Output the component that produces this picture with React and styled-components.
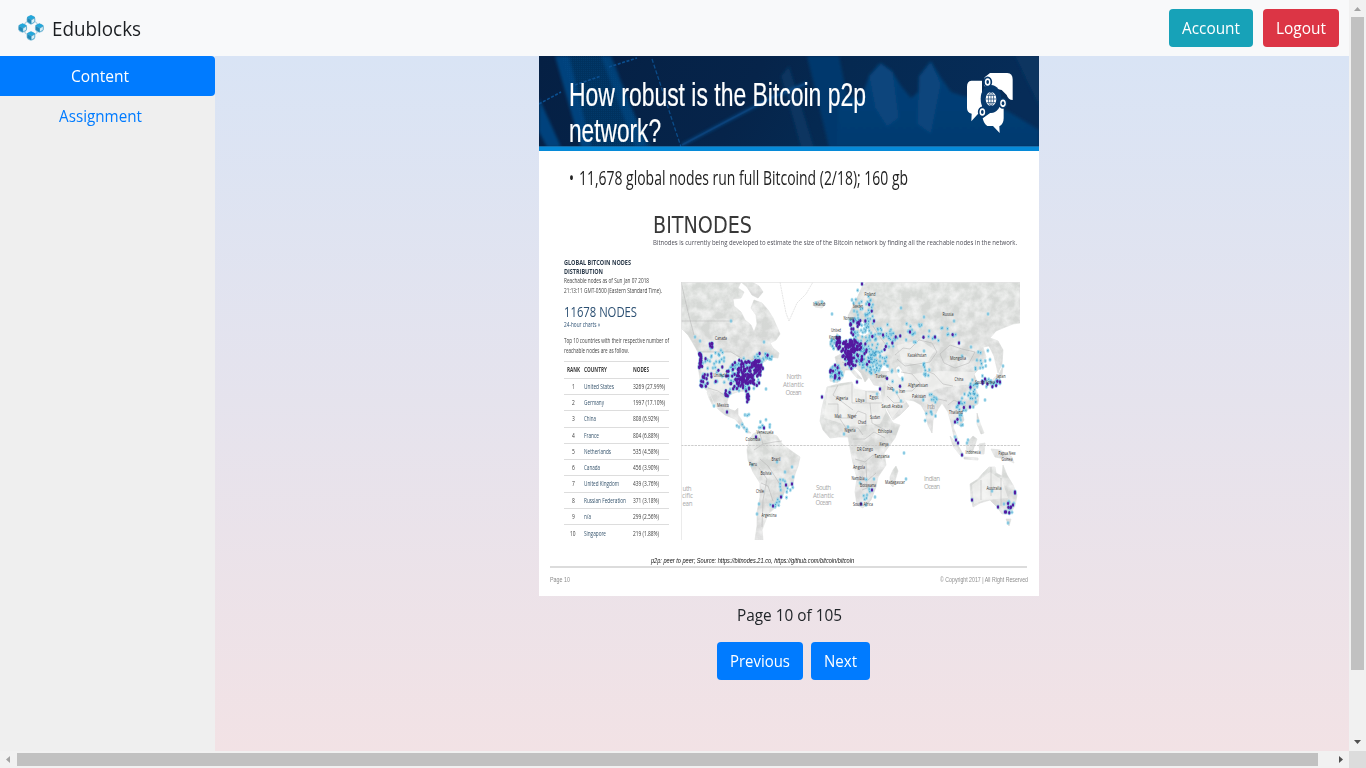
import React, { useLayoutEffect, useRef, useState } from "react";
import styled, { createGlobalStyle } from "styled-components";

const GlobalStyle = createGlobalStyle`
  * { box-sizing: border-box; }
  html, body { margin: 0; padding: 0; overflow: hidden; }
  body { font-family: "Open Sans", "Noto Sans", sans-serif; font-size: 16px; line-height: 24px; color: #212529; }
`;

/* ---------- text that is condensed to a given width ---------- */
const FitBox = styled.span`
  display: inline-block;
  flex: none;
  white-space: nowrap;
  text-align: left;
`;
const FitInner = styled.span`
  display: inline-block;
  transform-origin: 0 50%;
`;
function Fit({ w, children }) {
  const ref = useRef(null);
  const [scale, setScale] = useState(1);
  useLayoutEffect(() => {
    const natural = ref.current.offsetWidth;
    if (natural) setScale(w / ref.current.getBoundingClientRect().width * scale);
  }, [w]);
  return (
    <FitBox style={{ width: w }}>
      <FitInner ref={ref} style={{ transform: `scaleX(${scale})` }}>{children}</FitInner>
    </FitBox>
  );
}

/* ---------- page frame ---------- */
const Window = styled.div`
  display: grid;
  grid-template-columns: 1349px 17px;
  grid-template-rows: 751px 17px;
  width: 1366px;
  height: 768px;
  overflow: hidden;
`;
const Page = styled.div`
  display: flex;
  flex-direction: column;
  overflow: hidden;
`;
const Navbar = styled.nav`
  display: flex;
  flex: none;
  align-items: center;
  gap: 10px;
  height: 56px;
  padding: 0 10px 0 16px;
  background: #f8f9fa;
`;
const Brand = styled.a`
  display: flex;
  align-items: center;
  gap: 6px;
  margin-right: auto;
  font-size: 20px;
  line-height: 30px;
  color: #1b1e21;
`;
const BrandName = styled.span`
  display: flex;
  padding-top: 2px;
`;
const Button = styled.button`
  display: flex;
  align-items: center;
  justify-content: center;
  height: 38px;
  padding: 0 13px;
  border: 0;
  border-radius: 4px;
  background: ${(p) => p.$bg};
  color: #fff;
  font: inherit;
`;
const Body = styled.div`
  display: flex;
  flex: 1;
  min-height: 0;
`;
const Sidebar = styled.aside`
  flex: none;
  width: 215px;
  background: #efefef;
`;
const NavPill = styled.a`
  display: flex;
  justify-content: center;
  align-items: center;
  height: 40px;
  padding-right: 15px;
  border-radius: 0 4px 4px 0;
  background: ${(p) => (p.$active ? "#007bff" : "transparent")};
  color: ${(p) => (p.$active ? "#fff" : "#007bff")};
`;
const Main = styled.main`
  flex: 1;
  padding-left: 324px;
  background: linear-gradient(to bottom, #d9e4f5 0%, #f2e2e5 100%);
`;
const Viewer = styled.div`
  display: flex;
  flex-direction: column;
  align-items: center;
  width: 500px;
`;
const PageCount = styled.div`
  height: 24px;
  margin: 7px 0 15px;
`;
const Pager = styled.div`
  display: flex;
  gap: 8px;
  margin-left: 9px;
`;

/* ---------- scrollbars ---------- */
const VBar = styled.div`
  display: flex;
  flex-direction: column;
  align-items: center;
  background: #f1f1f1;
`;
const HBar = styled.div`
  display: flex;
  align-items: center;
  background: #f1f1f1;
`;
const Corner = styled.div`
  background: #dcdcdc;
`;
const ArrowBox = styled.svg`
  flex: none;
  width: 17px;
  height: 17px;
`;
const VThumb = styled.div`
  width: 13px;
  height: 653px;
  margin-bottom: auto;
  background: #c1c1c1;
`;
const HThumb = styled.div`
  width: 1301px;
  height: 13px;
  margin-right: auto;
  background: #c1c1c1;
`;

/* ---------- slide ---------- */
const Slide = styled.article`
  width: 500px;
  height: 540px;
  background: #fff;
  overflow: hidden;
`;
const SlideHead = styled.header`
  position: relative;
  display: flex;
  justify-content: space-between;
  height: 95px;
  padding: 21px 24px 0 30px;
  border-bottom: 4px solid #068ad8;
  background: #062750;
`;
const HeadArt = styled.svg`
  position: absolute;
  inset: 0;
  width: 500px;
  height: 91px;
`;
const SlideTitle = styled.h1`
  position: relative;
  margin: 0;
  display: flex;
  flex-direction: column;
  font: 400 32.5px/36px "Liberation Sans", sans-serif;
  color: #fff;
  -webkit-text-stroke: 0.2px #fff;
`;
const HeadLogo = styled.svg`
  position: relative;
  width: 50px;
  height: 65px;
  margin-top: -7px;
`;
const Bullet = styled.div`
  display: flex;
  gap: 5px;
  height: 28px;
  margin: 12px 0 0 30px;
  font-size: 20.3px;
  line-height: 28px;
  color: #222;
`;
const Bitnodes = styled.div`
  display: flex;
  flex-direction: column;
  height: 59px;
  padding: 22px 0 0 114px;
`;
const BitnodesName = styled.div`
  height: 24px;
  font: 400 22.6px/24px "DejaVu Sans", sans-serif;
  color: #383838;
`;
const Line = styled.div`
  height: ${(p) => p.$h}px;
  margin-top: ${(p) => p.$mt || 0}px;
  font-family: "Open Sans", sans-serif;
  font-size: ${(p) => p.$s}px;
  font-weight: ${(p) => p.$b || 400};
  line-height: ${(p) => p.$h}px;
  color: ${(p) => p.$c || "#444"};
`;
const Columns = styled.div`
  display: flex;
  height: 305px;
  padding-left: 25px;
`;
const Stats = styled.section`
  width: 105px;
  padding-top: 8px;
`;
const Table = styled.div`
  margin-top: 5px;
  border-top: 1px solid #ddd;
`;
const Row = styled.div`
  display: grid;
  grid-template-columns: 20px 49px 36px;
  align-items: center;
  height: ${(p) => (p.$head ? 16.8 : 16.28)}px;
  padding-top: ${(p) => (p.$head ? 1 : 0.6)}px;
  border-bottom: ${(p) => (p.$last ? 0 : 1)}px solid #ddd;
  font-size: 6.8px;
  line-height: 14px;
  color: #3c3c3c;
  font-weight: ${(p) => (p.$head ? 700 : 400)};
`;
const Rank = styled.span`
  display: flex;
  justify-content: center;
  padding-right: 2px;
`;
const Country = styled.span`
  display: flex;
  color: ${(p) => (p.$head ? "#444" : "#35536c")};
`;
const MapSvg = styled.svg`
  width: 339px;
  height: 258px;
  margin: 32px 0 0 12px;
`;
const SourceLine = styled.div`
  display: flex;
  height: 13px;
  margin: 0 12px 0 11px;
  padding-left: 101px;
  border-bottom: 2px solid #dcdcdc;
  font: italic 7.6px/12px "Liberation Sans", sans-serif;
  color: #111;
`;
const SlideFoot = styled.footer`
  display: flex;
  justify-content: space-between;
  margin: 6px 11px 0;
  font: 400 7.6px/12px "Liberation Sans", sans-serif;
  color: #8c8c8c;
`;

const COUNTRIES = [
  ["1", "United States", 30, "3269 (27.99%)", 32],
  ["2", "Germany", 20, "1997 (17.10%)", 32],
  ["3", "China", 12, "808 (6.92%)", 26],
  ["4", "France", 15, "804 (6.88%)", 26],
  ["5", "Netherlands", 27, "535 (4.58%)", 26],
  ["6", "Canada", 16, "456 (3.90%)", 26],
  ["7", "United Kingdom", 35, "439 (3.76%)", 26],
  ["8", "Russian Federation", 42, "371 (3.18%)", 26],
  ["9", "n/a", 7, "299 (2.56%)", 26],
  ["10", "Singapore", 22, "219 (1.88%)", 26],
];

/* ---------- map data ---------- */
const LAND = [
  "M681 282H741L738 288 744 292 741 298 733 299 734 306 741 312 745 320 751 325 754 332 757 324 756 315 751 308 754 300 762 303 768 310 773 318 777 327 780 334 776 340 770 343 773 348 779 353 778 358 770 357 766 361 760 364 757 371 753 379 749 387 750 397 749 403 746 400 745 391 737 392 729 395 727 402 729 409 735 411 738 408 738 415 741 419 745 428 751 433 747 433 741 426 735 419 725 415 718 409 714 402 710 393 704 388 700 379 698 366 700 356 694 345 688 335 681 328Z",
  "M741 282L747 287 752 295 758 298 763 292 759 286 752 282Z",
  "M708 391L711 397 715 407 713 406 709 398 707 392Z",
  "M749 441L753 434 759 431 768 433 777 436 782 444 790 450 800 457 798 466 795 474 793 484 786 488 782 498 776 507 768 514 765 522 762 530 763 540H755L757 526 757 512 760 497 760 483 753 472 748 460 747 450Z",
  "M850 326L848 316 852 308 858 296 863 285 868 282H1020V323L1013 324 1003 328 996 331 990 338 998 341 1003 350 1002 364 998 373 994 356 989 346 983 347 986 357 982 366 974 374 978 384 975 388 979 396 978 404 969 409 962 412 964 420 960 426 955 422 953 427 958 439 954 437 951 423 948 412 942 403 938 409 933 420 932 433 928 425 925 412 921 405 914 401 904 399 909 406 900 415 893 420 888 411 882 398 880 386 874 385 869 377 865 382 861 373 856 368 853 369 862 379 857 378 850 370 845 370 843 378 837 383 830 381 830 367 837 365 835 357 843 353 847 343 854 341 857 333 863 337 871 332 867 326 860 319 857 324 860 333 855 332Z",
  "M837 351L843 349 840 341 837 333 835 340Z M830 347L834 345 833 339 830 341Z",
  "M827 387L838 384 852 382 854 389 866 391 878 391 882 399 886 411 893 423 900 425 895 438 884 453 886 465 878 477 876 487 871 500 863 508 857 505 855 492 857 478 853 463 850 448 848 437 838 437 830 438 823 430 820 421 822 408Z",
  "M896 466L898 471 893 487 890 484 890 477 893 470Z",
  "M970 484L978 479 983 473 989 467 995 467 996 473 1002 476 1003 465 1007 475 1013 485 1017 495 1015 506 1010 514 1002 514 997 507 990 500 980 503 973 507 971 498Z",
  "M1006 519L1011 519 1009 526Z",
  "M950 436L959 447 964 456 960 455 953 446Z M966 444L973 436 977 439 972 453 967 451Z M964 457L978 458 978 460 964 459Z M991 449L1000 450 1012 457 1014 463 1005 459 995 457Z M979 444L985 443 984 454 980 454Z M977 413L980 423 984 433 981 434 977 424Z",
  "M1003 366L1002 375 996 382 989 386 994 378 999 374Z",
  "M814 302L822 300 826 304 822 308 815 307Z",
];
/* paler, drier ground drawn over the land */
const PALE_LAND =
  "M700 352H731L741 358 752 364 753 378 745 389 728 394 712 391 702 380Z M828 388L852 384 866 392 880 394 886 412 880 424 850 426 824 418Z M887 372L912 374 940 371 975 372 972 384 940 388 912 398 904 404 892 418 884 402Z M897 345L920 340 935 350 925 366 902 362Z M972 485L990 472 1002 480 1008 498 985 500 974 504Z";
const BORDERS =
  "M699 352H731L741 358 750 361 757 356 762 359M681 321H733M708 388L718 391 727 397M681 282L688 312 694 335M895 355L903 348 910 349 919 340 932 343 937 352 930 362 918 364 905 366 897 359M940 354L950 345 962 349 975 352 969 363 955 368 944 363ZM924 370L934 374 943 384 953 386M901 372L912 374 920 383 912 391 902 391M888 384L894 389 901 401M887 396L894 403 904 402M838 385L833 395 853 410M852 384V403H866V391M866 403H882M828 404H838V418H853L858 411 866 414 866 426M870 403L872 423 885 430M840 419L846 428 858 428 863 435M853 439H865L874 432 885 438M855 459L865 462 873 455 882 459M857 480H868L876 473M866 463L867 488M862 490L872 486M760 434L763 444 754 450M763 444L774 442 782 441M760 459L768 466 774 475 779 483M761 483L768 486 773 501M759 468L767 479 763 500 762 527M842 362L849 365 857 360 866 354M850 352L857 351 865 344M864 344L872 351 879 362M870 292L869 309M873 326L880 337 889 349M948 405L954 400 966 406M930 393L938 399 947 401M991 467V496M1001 478V506M981 480V500";

/* [centre x, centre y, radius x, radius y, number, dark share] */
const CLUSTERS = [
  [745, 375, 16, 17, 110, 0.3],
  [748, 373, 11, 13, 70, 0.75],
  [757, 367, 6, 7, 46, 0.85],
  [745, 381, 8, 8, 40, 0.85],
  [735, 377, 9, 15, 56, 0.3],
  [700, 361, 1.6, 9, 22, 0.95],
  [704, 382, 4, 6, 18, 0.8],
  [716, 368, 14, 19, 40, 0.3],
  [748, 399, 1.6, 5, 11, 0.9],
  [763, 358, 10, 5, 28, 0.08],
  [728, 393, 5, 3, 12, 0.6],
  [711, 345, 1.5, 4, 7, 0.9],
  [848, 350, 7, 11, 85, 0.92],
  [838, 343, 2.5, 7, 36, 0.85],
  [856, 352, 9, 12, 80, 0.4],
  [851, 363, 6, 6, 34, 0.5],
  [836, 373, 7, 8, 64, 0.2],
  [833, 344, 3, 5, 14, 0.1],
  [855, 323, 7, 4, 26, 0.5],
  [853, 335, 3, 8, 16, 0.5],
  [865, 347, 12, 20, 96, 0.06],
  [873, 360, 14, 14, 76, 0.06],
  [870, 318, 5, 20, 32, 0.1],
  [886, 337, 12, 13, 34, 0.06],
  [862, 307, 12, 20, 20, 0.08],
  [908, 332, 18, 12, 18, 0.05],
  [942, 335, 18, 7, 14, 0.1],
  [974, 391, 5, 12, 28, 0.03],
  [965, 404, 9, 10, 20, 0.05],
  [990, 383, 12, 4, 26, 0.3],
  [983, 363, 11, 14, 14, 0.05],
  [927, 368, 4, 9, 10, 0],
  [930, 407, 8, 18, 14, 0],
  [893, 376, 12, 18, 12, 0.05],
  [961, 420, 4, 7, 10, 0.1],
  [785, 486, 8, 12, 12, 0],
  [775, 503, 6, 4, 7, 0],
  [765, 424, 7, 9, 8, 0],
  [744, 422, 8, 10, 9, 0],
  [1011, 507, 4, 7, 10, 0.4],
  [868, 489, 8, 12, 6, 0],
];
const LIGHT = [
  [731, 321], [695, 337], [700, 341], [764, 342], [816, 303], [822, 302], [832, 314], [766, 389], [714, 406],
  [752, 465], [777, 462], [792, 467], [785, 472], [793, 477], [759, 504], [757, 514], [904, 453], [906, 479],
  [901, 308], [924, 317], [954, 321], [988, 314], [924, 351], [962, 356], [971, 347], [1003, 366], [848, 427],
  [844, 434], [936, 398], [967, 443], [968, 440], [874, 479], [860, 483], [867, 495], [875, 497], [866, 505],
  [992, 491], [1004, 504], [1008, 523], [978, 421], [955, 437], [912, 330], [877, 394], [901, 401], [985, 400],
];
const DARK = [
  [727, 412], [756, 437], [786, 485], [792, 484], [773, 506], [781, 497], [764, 428], [883, 335], [935, 337],
  [959, 343], [822, 397], [880, 389], [970, 407], [955, 422], [956, 440], [958, 443], [962, 455], [872, 490],
  [861, 504], [972, 500], [1015, 492], [1015, 493], [998, 507], [1005, 512], [1006, 512], [1013, 505],
  [1011, 507], [1000, 382], [985, 379], [862, 284], [874, 321], [910, 332], [857, 382],
];
function buildNodes() {
  let seed = 7;
  const rnd = () => {
    seed = (seed * 16807) % 2147483647;
    return seed / 2147483647;
  };
  const light = [...LIGHT];
  const dark = [];
  CLUSTERS.forEach(([cx, cy, rx, ry, n, share]) => {
    for (let i = 0; i < n; i++) {
      const a = rnd() * Math.PI * 2;
      const r = Math.sqrt(rnd());
      const p = [cx + Math.cos(a) * r * rx, cy + Math.sin(a) * r * ry];
      (rnd() < share ? dark : light).push(p);
    }
  });
  return { light, dark: [...dark, ...DARK] };
}
const NODES = buildNodes();

/* [text, centre x, baseline y, width] */
const LABELS = [
  ["Canada", 721, 340, 12], ["United S.", 721, 377, 15], ["Mexico", 723, 407, 12], ["Iceland", 819, 306, 12],
  ["United", 836, 332, 10], ["Kingdom", 835, 339, 12], ["Norway", 849, 320, 11], ["Sweden", 858, 308, 10],
  ["Finland", 870, 296, 11], ["Russia", 948, 316, 11], ["Kazakhstan", 917, 357, 19], ["Mongolia", 958, 360, 16],
  ["China", 959, 381, 9], ["South Korea", 985, 384, 20], ["Japan", 1001, 378, 9], ["Turkey", 881, 378, 11],
  ["Iraq", 890, 390, 6], ["Iran", 902, 393, 6], ["Afghanistan", 918, 387, 20], ["Pakistan", 919, 398, 14],
  ["Algeria", 842, 400, 12], ["Libya", 860, 402, 9], ["Egypt", 874, 399, 9], ["Saudi Arabia", 892, 408, 21],
  ["Thailand", 956, 414, 14], ["Mali", 838, 418, 7], ["Niger", 852, 418, 9], ["Chad", 862, 424, 8],
  ["Sudan", 875, 419, 10], ["Nigeria", 850, 432, 11], ["Ethiopia", 885, 433, 14], ["DR Congo", 865, 451, 16],
  ["Kenya", 884, 446, 9], ["Tanzania", 882, 458, 15], ["Angola", 859, 469, 12], ["Namibia", 858, 479.5, 13],
  ["Botswana", 868, 487, 16], ["Madagascar", 895, 484, 20], ["South Africa", 863, 506, 20],
  ["Indonesia", 973, 454, 15], ["Papua New", 1007, 455, 17], ["Guinea", 1007, 461, 11],
  ["Australia", 994, 490, 15], ["Venezuela", 765, 434, 17], ["Colombia", 753, 441, 15], ["Brazil", 776, 461, 9],
  ["Peru", 753, 466, 8], ["Bolivia", 766, 475, 11], ["Chile", 760, 493, 8], ["Argentina", 769, 517, 15],
];
const PALE = [
  ["North", 794, 379, 15], ["Atlantic", 793.5, 387, 21], ["Ocean", 793.5, 395, 16],
  ["South", 823.5, 490, 15], ["Atlantic", 823.5, 498, 21], ["Ocean", 823.5, 505, 16],
  ["Indian", 932, 481, 16], ["Ocean", 932, 489, 16],
  ["uth", 687, 491, 9], ["cific", 687.5, 498, 11], ["ean", 687.5, 506, 10], ["India", 931, 409, 8],
];

function WorldMap() {
  return (
    <MapSvg viewBox="681 282 339 258">
      <defs>
        <linearGradient id="land" x1="0" y1="0" x2="0.1" y2="1">
          <stop offset="0" stopColor="#d6d9d6" />
          <stop offset="0.5" stopColor="#d5d7d5" />
          <stop offset="1" stopColor="#dbdbdb" />
        </linearGradient>
        <filter id="relief" x="0" y="0" width="1" height="1">
          <feTurbulence type="fractalNoise" baseFrequency="0.1" numOctaves="4" seed="4" result="n" />
          <feColorMatrix in="n" type="matrix" values="0 0 0 0 1  0 0 0 0 1  0 0 0 0 1  1.3 0 0 0 -0.42" result="w" />
          <feComposite in="w" in2="SourceGraphic" operator="in" result="c" />
          <feMerge><feMergeNode in="SourceGraphic" /><feMergeNode in="c" /></feMerge>
        </filter>
      </defs>
      <g fill="url(#land)" stroke="#d0d2d1" strokeWidth="0.5" filter="url(#relief)">
        {LAND.map((d, i) => <path key={i} d={d} />)}
      </g>
      <path d={PALE_LAND} fill="#f6f6f5" fillOpacity="0.6" />
      <path d="M780 282L783 298 786 313 789 321 793 312 797 303 806 294 813 282" fill="none" stroke="#dedede" strokeWidth="0.8" strokeDasharray="2 0.6" />
      <path d="M871 368L879 371 889 371 888 366 878 364Z M899 366L904 374 903 381 898 376 896 368Z M736 357L743 360 749 363 745 365 739 361Z" fill="#fff" />
      <path d={BORDERS} fill="none" stroke="#b0b0b0" strokeWidth="0.5" />
      <path d="M681 445.5H1020" stroke="#c6c6c6" strokeWidth="0.9" strokeDasharray="2.4 1" />
      <path d="M681.4 540V282.4H1020" fill="none" stroke="#e2e2e2" strokeWidth="0.8" />
      <g fill="#a9a9a9" fontFamily="Open Sans" fontSize="6.2">
        {PALE.map(([t, x, y, w], i) => (
          <text key={i} x={x - w / 2} y={y} textLength={w}>{t}</text>
        ))}
      </g>
      <g fill="#9ad6ea" fillOpacity="0.85">
        {NODES.light.map(([x, y], i) => <ellipse key={i} cx={x} cy={y} rx="1.5" ry="2.1" />)}
      </g>
      <g fill="#3f9cc6">
        {NODES.light.map(([x, y], i) => <ellipse key={i} cx={x} cy={y} rx="0.5" ry="0.8" />)}
      </g>
      <g fill="#7cc0e6" fillOpacity="0.6">
        {NODES.dark.map(([x, y], i) => <ellipse key={i} cx={x} cy={y} rx="1.8" ry="2.4" />)}
      </g>
      <g fill="#55199f">
        {NODES.dark.map(([x, y], i) => <ellipse key={i} cx={x} cy={y} rx="1.1" ry="1.7" />)}
      </g>
      <g fill="#2c2c2c" fontFamily="Open Sans" fontSize="5.2">
        {LABELS.map(([t, x, y, w], i) => (
          <text key={i} x={x - w / 2} y={y} textLength={w} lengthAdjust="spacingAndGlyphs">{t}</text>
        ))}
      </g>
    </MapSvg>
  );
}

function HeaderArt() {
  return (
    <HeadArt viewBox="0 0 500 91" preserveAspectRatio="none">
      <defs>
        <linearGradient id="hg" x1="0" x2="1" y1="0" y2="0.1">
          <stop offset="0" stopColor="#052044" />
          <stop offset="0.45" stopColor="#06244a" />
          <stop offset="0.62" stopColor="#052951" />
          <stop offset="1" stopColor="#062c58" />
        </linearGradient>
        <linearGradient id="wg" x1="0" x2="0" y1="0" y2="1">
          <stop offset="0" stopColor="#064078" />
          <stop offset="1" stopColor="#053a70" />
        </linearGradient>
        <filter id="soft"><feGaussianBlur stdDeviation="1.8" /></filter>
        <pattern id="mesh" width="2" height="2" patternUnits="userSpaceOnUse">
          <rect width="1" height="1" fill="#0b5391" fillOpacity="0.22" />
        </pattern>
      </defs>
      <rect width="500" height="91" fill="url(#hg)" />
      <g filter="url(#soft)">
        <path d="M20 0H66L112 91H48Z" fill="#06325f" />
        <path d="M16 0H30L52 91H42Z" fill="#05427d" />
        <path d="M62 0H72L108 91H96Z" fill="#063f77" />
        <path d="M0 42L22 91H8L0 76Z" fill="#05427d" />
        <path d="M268 0H300L318 91H290Z" fill="#06396d" />
        <path d="M298 91L300 50 312 40 322 44 330 20 340 8 352 14 362 30 372 42 382 34 386 12 392 6 402 22 412 36 424 40 450 46 470 56 500 74V91Z" fill="url(#wg)" />
        <path d="M330 20L342 7 354 16 360 62 348 71 336 52Z M380 20L392 5 402 28 392 78 378 68Z" fill="#07447c" />
        <path d="M250 10L275 91H262L242 20Z M476 0L500 50V0Z" fill="#073561" />
      </g>
      <path d="M22 0H66L112 91H50Z" fill="url(#mesh)" />
      <g filter="url(#soft)" opacity="0.6">
        <path d="M143 89L190 64 232 42 268 27" stroke="#0b5aa0" strokeWidth="3" fill="none" />
      </g>
      <path d="M0 48L22 36M36 29L62 20M70 11L98 2" stroke="#0b4f90" strokeWidth="1.6" strokeDasharray="3 1.6" fill="none" />
      <path d="M113 3L142 91" stroke="#0b4c89" strokeWidth="1.3" strokeDasharray="4 2" fill="none" />
      <path d="M143 89L190 64 232 42 268 27" stroke="#0b4a86" strokeWidth="1.6" fill="none" opacity="0.6" />
      <path d="M0 90.6H500" stroke="#2388c6" strokeWidth="0.8" />
    </HeadArt>
  );
}

function BubblesLogo() {
  return (
    <HeadLogo viewBox="525 60 150 195" preserveAspectRatio="none">
      <g fill="#fff">
        <path d="M544 92H576V190Q570 192 563 193L544 214 545 191Q531 188 531 174V110Q531 93 544 92Z" />
        <path d="M600 69H652Q668 70 668 88V150Q655 150 650 135L635 120 582 108 584 82Z" />
        <path d="M578 205L610 182 625 170 641 172V205Q641 222 628 229L629 249 609 228H592Q582 222 578 205Z" />
      </g>
      <ellipse cx="603" cy="147" rx="31" ry="42" fill="#07396c" />
      <g fill="#fff" stroke="#07396c" strokeWidth="5">
        <ellipse cx="593" cy="96" rx="11" ry="14" />
        <ellipse cx="639" cy="160" rx="11" ry="14" />
        <ellipse cx="577" cy="186" rx="11" ry="14" />
      </g>
      <g fill="#07396c">
        <ellipse cx="593" cy="96" rx="4" ry="6" />
        <ellipse cx="639" cy="160" rx="4" ry="6" />
        <ellipse cx="577" cy="186" rx="4" ry="6" />
      </g>
      <ellipse cx="603" cy="147" rx="16" ry="21" fill="#fff" />
      <g fill="none" stroke="#07396c" strokeWidth="2">
        <ellipse cx="603" cy="147" rx="8" ry="21" />
        <path d="M603 126V168M587 147H619M590 136H616M590 158H616" />
      </g>
    </HeadLogo>
  );
}

function Cube({ x, y }) {
  return (
    <g transform={`translate(${x} ${y})`}>
      <circle r="4.6" fill="#9fcbdf" />
      <path d="M0-4.6L4-2.6V2L0 4.6-4 2V-2.6Z" fill="#4ba5cb" />
      <path d="M0-4.6L4-2.6 0-.4-4-2.6Z" fill="#22a8dc" />
      <path d="M-3.4-1.6L0 .2V4L-3.4 1.8Z" fill="#2487b5" />
      <path d="M3.4-1.2L.6.4V3.6L3.4 1.8Z" fill="#d6eef7" />
    </g>
  );
}
function BrandLogo() {
  return (
    <svg width="30" height="30" viewBox="0 0 30 30">
      <circle cx="15" cy="15" r="7.6" fill="none" stroke="#b4d2e0" strokeWidth="1.2" />
      <Cube x={15} y={6.8} />
      <Cube x={6.6} y={15} />
      <Cube x={23.4} y={15} />
      <Cube x={15} y={23} />
    </svg>
  );
}

function BitcoinSlide() {
  return (
    <Slide>
      <SlideHead>
        <HeaderArt />
        <SlideTitle>
          <Fit w={297}>How robust is the Bitcoin p2p</Fit>
          <Fit w={92}>network?</Fit>
        </SlideTitle>
        <BubblesLogo />
      </SlideHead>
      <Bullet>
        <Fit w={5}>•</Fit>
        <Fit w={329}>11,678 global nodes run full Bitcoind (2/18); 160 gb</Fit>
      </Bullet>
      <Bitnodes>
        <BitnodesName><Fit w={99}>BITNODES</Fit></BitnodesName>
        <Line $h={9} $s={8} $c="#4e4e58">
          <Fit w={364}>Bitnodes is currently being developed to estimate the size of the Bitcoin network by finding all the reachable nodes in the network.</Fit>
        </Line>
      </Bitnodes>
      <Columns>
        <Stats>
          <Line $h={9} $s={7} $b={700} $c="#2d3c4c"><Fit w={67}>GLOBAL BITCOIN NODES</Fit></Line>
          <Line $h={9} $s={7} $b={700} $c="#2d3c4c"><Fit w={39}>DISTRIBUTION</Fit></Line>
          <Line $h={10} $s={6.8}><Fit w={85}>Reachable nodes as of Sun Jan 07 2018</Fit></Line>
          <Line $h={10} $s={6.8}><Fit w={98}>21:13:11 GMT-0500 (Eastern Standard Time).</Fit></Line>
          <Line $h={18} $s={15} $mt={6} $c="#2b4f72"><Fit w={73}>11678 NODES</Fit></Line>
          <Line $h={10} $s={6.8} $c="#2b4f72"><Fit w={36}>24-hour charts »</Fit></Line>
          <Line $h={10} $s={6.8} $mt={6}><Fit w={105}>Top 10 countries with their respective number of</Fit></Line>
          <Line $h={10} $s={6.8}><Fit w={65}>reachable nodes are as follow.</Fit></Line>
          <Table>
            <Row $head>
              <Rank><Fit w={13}>RANK</Fit></Rank>
              <Country $head><Fit w={23}>COUNTRY</Fit></Country>
              <Fit w={16}>NODES</Fit>
            </Row>
            {COUNTRIES.map(([rank, name, nw, count, cw], i) => (
              <Row key={rank} $last={i === 9}>
                <Rank><Fit w={rank.length > 1 ? 5.5 : 2.8}>{rank}</Fit></Rank>
                <Country><Fit w={nw}>{name}</Fit></Country>
                <Fit w={cw}>{count}</Fit>
              </Row>
            ))}
          </Table>
        </Stats>
        <WorldMap />
      </Columns>
      <SourceLine>
        <Fit w={203}>p2p: peer to peer; Source: https://bitnodes.21.co, https://github.com/bitcoin/bitcoin</Fit>
      </SourceLine>
      <SlideFoot>
        <Fit w={20}>Page 10</Fit>
        <Fit w={88}>© Copyright 2017 | All Right Reserved</Fit>
      </SlideFoot>
    </Slide>
  );
}

export default function App() {
  return (
    <Window>
      <GlobalStyle />
      <Page>
        <Navbar>
          <Brand>
            <BrandLogo />
            <BrandName><Fit w={89}>Edublocks</Fit></BrandName>
          </Brand>
          <Button $bg="#17a2b8"><Fit w={58}>Account</Fit></Button>
          <Button $bg="#dc3545"><Fit w={50}>Logout</Fit></Button>
        </Navbar>
        <Body>
          <Sidebar>
            <NavPill $active><Fit w={58}>Content</Fit></NavPill>
            <NavPill><Fit w={83}>Assignment</Fit></NavPill>
          </Sidebar>
          <Main>
            <Viewer>
              <BitcoinSlide />
              <PageCount><Fit w={105}>Page 10 of 105</Fit></PageCount>
              <Pager>
                <Button $bg="#007bff"><Fit w={60}>Previous</Fit></Button>
                <Button $bg="#007bff"><Fit w={33}>Next</Fit></Button>
              </Pager>
            </Viewer>
          </Main>
        </Body>
      </Page>
      <VBar>
        <ArrowBox viewBox="0 0 17 17"><path d="M5 11H12L8.5 7Z" fill="#a3a3a3" /></ArrowBox>
        <VThumb />
        <ArrowBox viewBox="0 0 17 17"><path d="M5 6H12L8.5 10Z" fill="#505050" /></ArrowBox>
      </VBar>
      <HBar>
        <ArrowBox viewBox="0 0 17 17"><path d="M10 5V12L6 8.5Z" fill="#a3a3a3" /></ArrowBox>
        <HThumb />
        <ArrowBox viewBox="0 0 17 17"><path d="M7 5V12L11 8.5Z" fill="#505050" /></ArrowBox>
      </HBar>
      <Corner />
    </Window>
  );
}
